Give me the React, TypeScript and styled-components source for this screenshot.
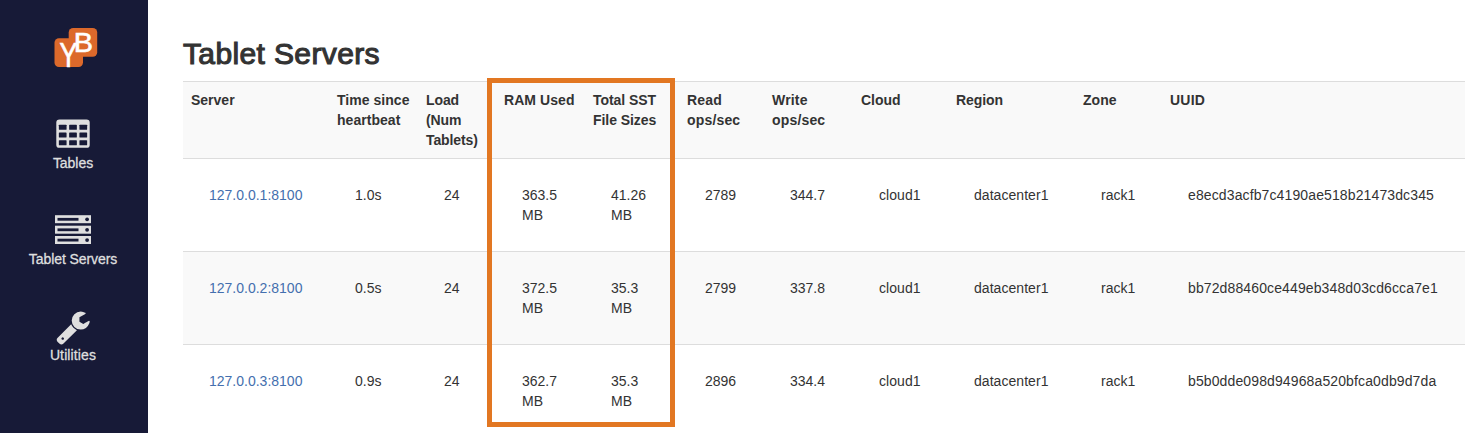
import React from "react";
import styled, { createGlobalStyle } from "styled-components";

const GlobalStyle = createGlobalStyle`
  * { box-sizing: border-box; }
  body {
    margin: 0;
    background: #fff;
    color: #333;
    font: 14px/20px "Liberation Sans", Arial, sans-serif;
    overflow: hidden;
  }
`;

const Page = styled.div`
  display: flex;
  height: 433px;
  overflow: hidden;
`;

const Sidebar = styled.nav`
  flex: 0 0 148px;
  display: flex;
  flex-direction: column;
  align-items: center;
  padding-top: 28px;
  background: #171a37;
`;

const Logo = styled.svg`
  display: block;
  width: 44px;
  height: 40px;
  margin: 0 0 49px 3px;
  overflow: visible;
`;

const NavItem = styled.a`
  display: flex;
  flex-direction: column;
  align-items: center;
  width: 146px;
  margin: 0 2px 40px 0;
  color: #dfdfdf;
  white-space: nowrap;
`;

const NavIcon = styled.svg`
  display: block;
  width: 36px;
  height: 36px;
  fill: #dfdfdf;
`;

const NavLabel = styled.span<{ $spacing: number }>`
  letter-spacing: ${(p) => p.$spacing}px;
  -webkit-text-stroke: 0.3px #dfdfdf;
`;

const Main = styled.main`
  flex: 1;
  padding: 37px 11px 0 35px;
`;

const Title = styled.h2`
  margin: 0 0 11px;
  color: #333;
  font-size: 30px;
  font-weight: 400;
  line-height: 33px;
  letter-spacing: 0.37px;
  -webkit-text-stroke: 1.1px #333;
`;

const TableArea = styled.div`
  position: relative;
`;

const Table = styled.table`
  width: 1282px;
  table-layout: fixed;
  border-collapse: separate;
  border-spacing: 0;
`;

const Col = styled.col<{ $width: number }>`
  width: ${(p) => p.$width}px;
`;

const Row = styled.tr`
  &:nth-child(odd) { background: #f9f9f9; }
`;

const HeadCell = styled.th<{ $spacing: number }>`
  height: 77px;
  padding: 8px;
  border-top: 1px solid #ddd;
  font-weight: 700;
  text-align: left;
  vertical-align: top;
  white-space: pre-line;
  letter-spacing: ${(p) => p.$spacing}px;
`;

const Cell = styled.td<{ $spacing: number }>`
  height: 93px;
  padding: 26px 8px 26px 26px;
  border-top: 1px solid #ddd;
  vertical-align: top;
  white-space: pre-line;
  letter-spacing: ${(p) => p.$spacing}px;
`;

const ServerLink = styled.a`
  color: #446fae;
`;

const Highlight = styled.div`
  position: absolute;
  left: 304px;
  top: -3px;
  width: 188px;
  height: 349px;
  border: 5px solid #e27722;
`;

const columns = [
  { label: "Server", width: 146, head: 0, body: 0 },
  { label: "Time since\nheartbeat", width: 89, head: 0.04, body: 0 },
  { label: "Load\n(Num\nTablets)", width: 78, head: -0.1, body: 0 },
  { label: "RAM Used", width: 89, head: 0.07, body: 0 },
  { label: "Total SST\nFile Sizes", width: 94, head: -0.06, body: 0 },
  { label: "Read\nops/sec", width: 85, head: 0.17, body: 0 },
  { label: "Write\nops/sec", width: 89, head: 0.17, body: 0 },
  { label: "Cloud", width: 95, head: 0, body: 0.05 },
  { label: "Region", width: 127, head: -0.08, body: 0.05 },
  { label: "Zone", width: 87, head: 0.05, body: 0 },
  { label: "UUID", width: 303, head: 0.25, body: 0.12 },
];

const servers = [
  ["127.0.0.1:8100", "1.0s", "24", "363.5\nMB", "41.26\nMB", "2789", "344.7", "cloud1", "datacenter1", "rack1", "e8ecd3acfb7c4190ae518b21473dc345"],
  ["127.0.0.2:8100", "0.5s", "24", "372.5\nMB", "35.3\nMB", "2799", "337.8", "cloud1", "datacenter1", "rack1", "bb72d88460ce449eb348d03cd6cca7e1"],
  ["127.0.0.3:8100", "0.9s", "24", "362.7\nMB", "35.3\nMB", "2896", "334.4", "cloud1", "datacenter1", "rack1", "b5b0dde098d94968a520bfca0db9d7da"],
];

const BrandLogo = () => (
  <Logo viewBox="0 0 44 40">
    <rect x="0.5" y="10.3" width="28.5" height="28.7" rx="4.5" fill="#dc692b" />
    <rect x="14.7" y="0" width="28.5" height="28.7" rx="4.5" fill="#dc692b" />
    <g fill="#fff" stroke="#fff" fontFamily="Liberation Sans, Arial, sans-serif">
      <text transform="translate(5.4 38.6) scale(0.77 1)" fontSize="35" strokeWidth="0.7">Y</text>
      <text transform="translate(19.7 23.9) scale(1.05 1)" fontSize="27.5" strokeWidth="0.6">B</text>
    </g>
  </Logo>
);

const TablesIcon = () => (
  <NavIcon viewBox="0 0 1792 1792">
    <rect x="64" y="128" width="1664" height="1408" rx="160" />
    <g fill="#171a37">
      {[384, 768, 1152].map((y) =>
        [192, 704, 1216].map((x) => (
          <rect key={`${x}-${y}`} x={x} y={y} width="384" height="256" rx="32" />
        ))
      )}
    </g>
  </NavIcon>
);

const ServersIcon = () => (
  <NavIcon viewBox="0 0 36 36">
    {[2.2, 12.7, 23].map((y) => (
      <g key={y}>
        <rect x="0" y={y} width="36" height="8" />
        <rect x="2.5" y={y + 2.7} width="21" height="2.8" fill="#171a37" />
        <circle cx="32.1" cy={y + 4.1} r="1.9" fill="#171a37" />
      </g>
    ))}
  </NavIcon>
);

const UtilitiesIcon = () => (
  <NavIcon viewBox="0 0 1792 1792">
    <path d="M448 1472q0-26-19-45t-45-19-45 19-19 45 19 45 45 19 45-19 19-45zm644-420l-682 682q-37 37-90 37-52 0-91-37l-106-108q-38-36-38-90 0-53 38-91l681-681q39 98 114.500 173.500t173.500 114.500zm634-435q0 39-23 106-47 134-164.500 217.500t-258.500 83.500q-185 0-316.500-131.500t-131.500-316.500 131.500-316.500 316.500-131.500q58 0 121.500 16.500t107.500 46.500q16 11 16 28t-16 28l-293 169v224l193 107q5-3 79-48.500t135.500-81 70.500-35.500q15 0 23.500 10t8.500 25z" />
  </NavIcon>
);

const navigation = [
  { label: "Tables", icon: <TablesIcon />, spacing: -0.05 },
  { label: "Tablet Servers", icon: <ServersIcon />, spacing: -0.08 },
  { label: "Utilities", icon: <UtilitiesIcon />, spacing: 0.12 },
];

export default function App() {
  return (
    <Page>
      <GlobalStyle />
      <Sidebar>
        <BrandLogo />
        {navigation.map((item) => (
          <NavItem key={item.label}>
            {item.icon}
            <NavLabel $spacing={item.spacing}>{item.label}</NavLabel>
          </NavItem>
        ))}
      </Sidebar>
      <Main>
        <Title>Tablet Servers</Title>
        <TableArea>
          <Table>
            <colgroup>
              {columns.map((c) => (
                <Col key={c.label} $width={c.width} />
              ))}
            </colgroup>
            <tbody>
              <Row>
                {columns.map((c) => (
                  <HeadCell key={c.label} $spacing={c.head}>{c.label}</HeadCell>
                ))}
              </Row>
              {servers.map((row) => (
                <Row key={row[0]}>
                  {row.map((value, i) => (
                    <Cell key={columns[i].label} $spacing={columns[i].body}>
                      {i === 0 ? <ServerLink>{value}</ServerLink> : value}
                    </Cell>
                  ))}
                </Row>
              ))}
            </tbody>
          </Table>
          <Highlight />
        </TableArea>
      </Main>
    </Page>
  );
}
